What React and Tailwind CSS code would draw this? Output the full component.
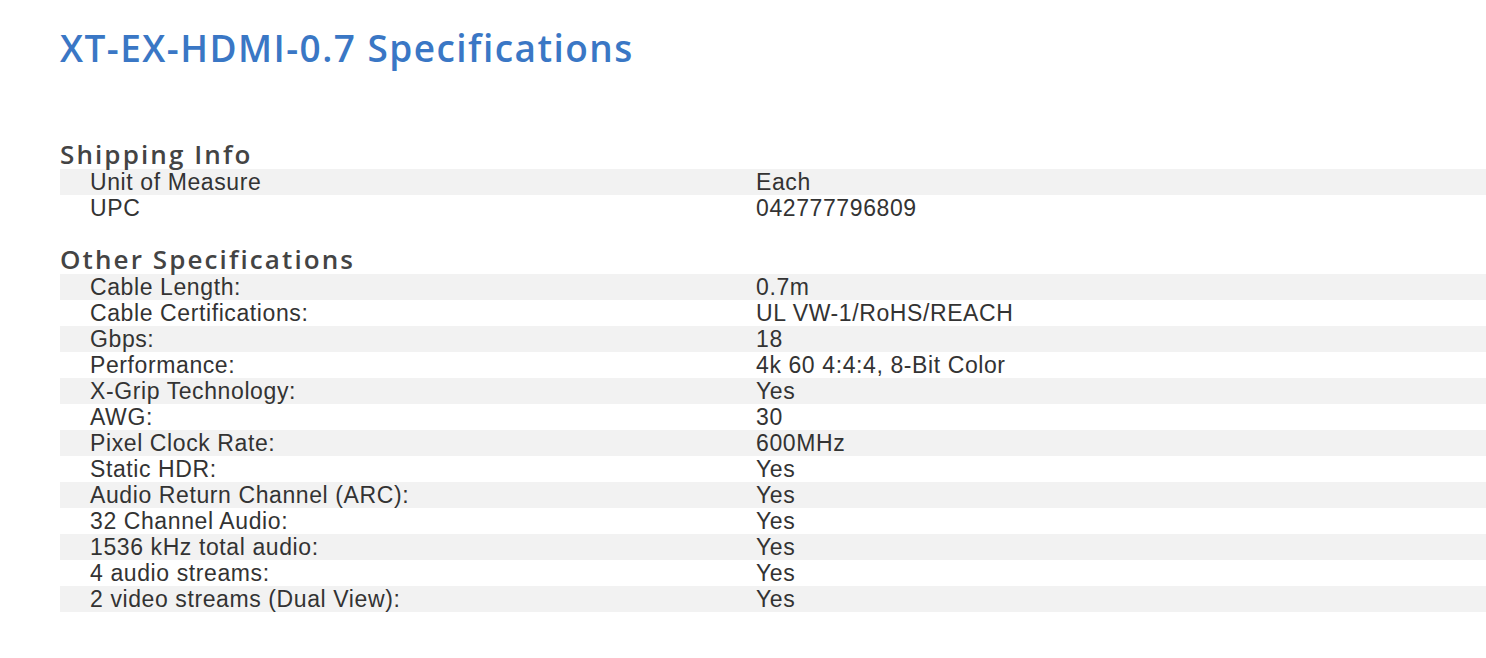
const shipping = [
  ["Unit of Measure", "Each"],
  ["UPC", "042777796809"],
];

const other = [
  ["Cable Length:", "0.7m"],
  ["Cable Certifications:", "UL VW-1/RoHS/REACH"],
  ["Gbps:", "18"],
  ["Performance:", "4k 60 4:4:4, 8-Bit Color"],
  ["X-Grip Technology:", "Yes"],
  ["AWG:", "30"],
  ["Pixel Clock Rate:", "600MHz"],
  ["Static HDR:", "Yes"],
  ["Audio Return Channel (ARC):", "Yes"],
  ["32 Channel Audio:", "Yes"],
  ["1536 kHz total audio:", "Yes"],
  ["4 audio streams:", "Yes"],
  ["2 video streams (Dual View):", "Yes"],
];

function SpecTable({ title, rows }) {
  return (
    <section>
      <h2 className="pt-[2px] pb-[4px] font-['Open_Sans',sans-serif] text-[26px] font-semibold leading-[22px] tracking-[2.1px] text-[#444]">
        {title}
      </h2>
      <div className="font-['Liberation_Sans',Arial,sans-serif] text-[23px] leading-[26px] tracking-[0.6px] text-[#333]">
        {rows.map(([k, v], i) => (
          <div
            key={k}
            className={`grid grid-cols-[696px_1fr] h-[26px] ${
              i % 2 === 0 ? "bg-[#f2f2f2]" : ""
            }`}
          >
            <span className="pl-[30px]">{k}</span>
            <span>{v}</span>
          </div>
        ))}
      </div>
    </section>
  );
}

export default function App() {
  return (
    <div className="min-h-[658px] bg-white pl-[60px] pt-[26px]">
      <h1 className="font-['Open_Sans',sans-serif] text-[37px] font-semibold leading-[44px] tracking-[1.45px] text-[#3a77c5]">
        XT-EX-HDMI-0.7 Specifications
      </h1>
      <div className="mt-[71px] flex flex-col gap-[25px]">
        <SpecTable title="Shipping Info" rows={shipping} />
        <SpecTable title="Other Specifications" rows={other} />
      </div>
    </div>
  );
}
